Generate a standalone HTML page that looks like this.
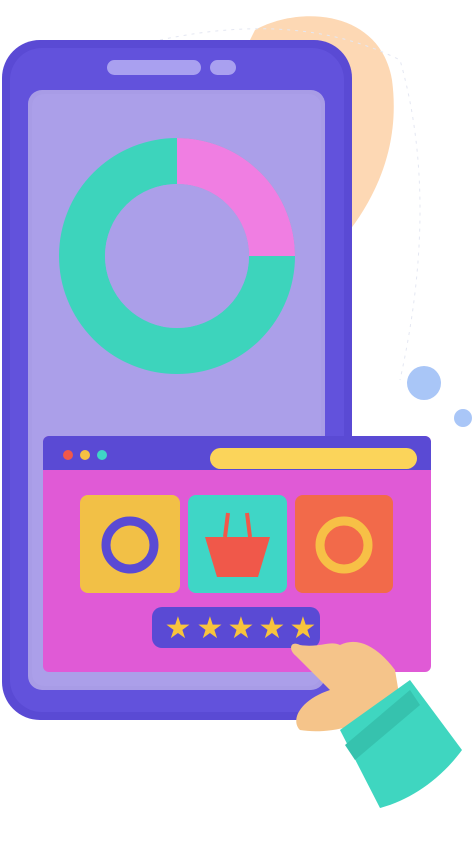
<!DOCTYPE html>
<html><head><meta charset="utf-8"><style>
html,body{margin:0;padding:0;background:#fff;width:475px;height:850px;overflow:hidden}
</style></head><body>
<svg width="475" height="850" viewBox="0 0 475 850" xmlns="http://www.w3.org/2000/svg">
<path d="M255 30 C300 5 380 10 392 80 C400 140 380 190 350 230 L300 230 L240 60 Z" fill="#fdd8b4"/>
<path d="M160 40 Q300 10 400 60 Q440 200 400 380" fill="none" stroke="#e4e7f2" stroke-dasharray="3 5"/>
<circle cx="424" cy="383" r="17" fill="#a9c6f7"/>
<circle cx="463" cy="418" r="9" fill="#a9c6f7"/>
<rect x="2" y="40" width="350" height="680" rx="38" fill="#5a4ad4"/>
<rect x="10" y="48" width="334" height="664" rx="32" fill="#6252dc"/>
<rect x="28" y="90" width="297" height="600" rx="14" fill="#a89ce6"/>
<rect x="32" y="94" width="289" height="592" rx="12" fill="#ab9fe9"/>
<rect x="107" y="60" width="94" height="15" rx="7.5" fill="#a9a0f0"/>
<rect x="210" y="60" width="26" height="15" rx="7.5" fill="#a9a0f0"/>
<circle cx="177" cy="256" r="95" fill="none" stroke="#3dd4bc" stroke-width="46"/>
<path d="M177 161 A95 95 0 0 1 272 256" fill="none" stroke="#f07ee2" stroke-width="46"/>
<circle cx="177" cy="256" r="72" fill="#ab9fe9"/>
<rect x="43" y="436" width="388" height="236" rx="6" fill="#e05ad6"/>
<path d="M43 442 a6 6 0 0 1 6 -6 h376 a6 6 0 0 1 6 6 v28 h-388 z" fill="#5a4ad4"/>
<circle cx="68" cy="455" r="5" fill="#f0584a"/>
<circle cx="85" cy="455" r="5" fill="#f5c043"/>
<circle cx="102" cy="455" r="5" fill="#3fd6c6"/>
<rect x="210" y="448" width="207" height="21" rx="10.5" fill="#fbd45a"/>
<rect x="80" y="495" width="100" height="98" rx="8" fill="#f2c046"/>
<circle cx="130" cy="545" r="24" fill="none" stroke="#5a4ad4" stroke-width="9"/>
<rect x="188" y="495" width="99" height="98" rx="8" fill="#3fd6c6"/>
<path d="M205 537 H270 L258 577 H217 Z" fill="#f0584a"/>
<path d="M225 537 L228 513 M250 537 L247 513" stroke="#f0584a" stroke-width="4" fill="none"/>
<rect x="295" y="495" width="98" height="98" rx="8" fill="#f26a4a"/>
<circle cx="344" cy="545" r="24" fill="none" stroke="#f7c046" stroke-width="9"/>
<rect x="152" y="607" width="168" height="41" rx="10" fill="#5a4ad4"/>
<g fill="#f8c43c" font-family="DejaVu Sans" font-size="30" text-anchor="middle">
<text x="178" y="638">★</text><text x="210" y="638">★</text><text x="241" y="638">★</text><text x="272" y="638">★</text><text x="303" y="638">★</text></g>
<path d="M300 645 C290 640 288 650 296 656 L330 690 C300 700 290 720 300 730 C330 735 370 725 400 700 L395 670 C380 650 360 635 340 645 C330 640 320 648 300 645 Z" fill="#f5c48a"/>
<path d="M340 730 L410 680 L462 750 C440 780 410 800 380 808 Z" fill="#3fd6c0"/>
<path d="M345 745 L410 690 L420 705 L355 760 Z" fill="#36c2ae"/>
</svg>
</body></html>
